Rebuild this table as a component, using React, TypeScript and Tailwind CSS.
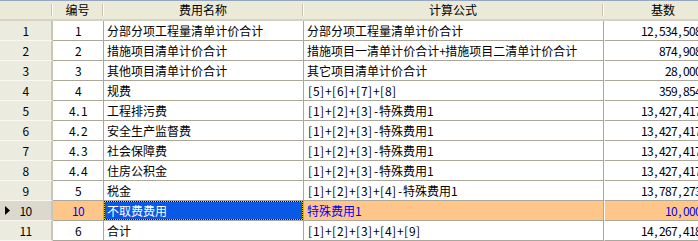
import React from 'react';

interface FeeRow {
  no: string;
  name: string;
  formula: string;
  base: string;
}

const rows: FeeRow[] = [
  { no: '1', name: '分部分项工程量清单计价合计', formula: '分部分项工程量清单计价合计', base: '12,534,508.00' },
  { no: '2', name: '措施项目清单计价合计', formula: '措施项目一清单计价合计+措施项目二清单计价合计', base: '874,908.00' },
  { no: '3', name: '其他项目清单计价合计', formula: '其它项目清单计价合计', base: '28,000.00' },
  { no: '4', name: '规费', formula: '[5]+[6]+[7]+[8]', base: '359,854.00' },
  { no: '4.1', name: '工程排污费', formula: '[1]+[2]+[3]-特殊费用1', base: '13,427,417.00' },
  { no: '4.2', name: '安全生产监督费', formula: '[1]+[2]+[3]-特殊费用1', base: '13,427,417.00' },
  { no: '4.3', name: '社会保障费', formula: '[1]+[2]+[3]-特殊费用1', base: '13,427,417.00' },
  { no: '4.4', name: '住房公积金', formula: '[1]+[2]+[3]-特殊费用1', base: '13,427,417.00' },
  { no: '5', name: '税金', formula: '[1]+[2]+[3]+[4]-特殊费用1', base: '13,787,273.00' },
  { no: '10', name: '不取费费用', formula: '特殊费用1', base: '10,000.00' },
  { no: '6', name: '合计', formula: '[1]+[2]+[3]+[4]+[9]', base: '14,267,418.00' },
];

const SELECTED = 9;

// half-width cells for ascii, like the old bitmap font
const Txt: React.FC<{ text: string }> = ({ text }) => (
  <span className="whitespace-nowrap leading-none">
    {Array.from(text).map((ch, k) =>
      ch.charCodeAt(0) < 128 ? (
        <span key={k} className="inline-block w-[6px] text-center">
          {ch}
        </span>
      ) : (
        <span key={k}>{ch}</span>
      )
    )}
  </span>
);

const HeaderCell: React.FC<{ label?: string }> = ({ label }) => (
  <div className="flex items-center h-full">
    <span className="flex-1 text-center leading-none">{label}</span>
    <span className="w-[2px] h-[12px] border-l border-[#c6c3b2] bg-white" />
  </div>
);

export default function App() {
  return (
    <div className="w-[698px] h-[241px] overflow-hidden bg-white text-[12px] text-black font-['Noto_Sans_CJK_SC',sans-serif]">
      <div className="w-[724px]">
        {/* header */}
        <div className="grid grid-cols-[53px_51px_200px_300px_120px] h-[21px] bg-[#ebe9d8] border-t border-[#94a6c0] border-b-2 border-b-[#d6d3c2]">
          <HeaderCell />
          <HeaderCell label="编号" />
          <HeaderCell label="费用名称" />
          <HeaderCell label="计算公式" />
          <div className="flex items-center h-full pr-[2px]">
            <span className="flex-1 text-center leading-none">基数</span>
          </div>
        </div>

        {rows.map((r, i) => {
          const sel = i === SELECTED;
          return (
            <div key={i} className="grid grid-cols-[53px_51px_200px_300px_120px] h-[20px]">
              <div
                className={`flex items-center border-r-2 border-r-[#c9c6b6] border-b border-b-[#f8f7f0] ${
                  sel ? 'bg-[#dbd9cd]' : 'bg-[#ecebdf]'
                }`}
              >
                <span className="w-[12px] pl-[5px] flex items-center">
                  {sel && (
                    <svg width="5" height="9" viewBox="0 0 5 9">
                      <path d="M0 0 L5 4.5 L0 9 Z" fill="#000" />
                    </svg>
                  )}
                </span>
                <span className="flex-1 text-center pr-[12px]">
                  <Txt text={String(i + 1)} />
                </span>
              </div>
              <div
                className={`flex items-center justify-center border-r border-b border-[#aca899] ${
                  sel ? 'bg-[#ffc68a] text-[#0000ff]' : ''
                }`}
              >
                <Txt text={r.no} />
              </div>
              <div className="border-r border-b border-[#aca899]">
                {sel ? (
                  <div className="h-full bg-[#e8d000]">
                    <div className="h-full flex items-center pl-[2px] border border-dotted border-black bg-[#0a58e6] bg-clip-padding text-white">
                      <Txt text={r.name} />
                    </div>
                  </div>
                ) : (
                  <div className="h-full flex items-center pl-[3px]">
                    <Txt text={r.name} />
                  </div>
                )}
              </div>
              <div
                className={`flex items-center pl-[3px] border-r border-b border-[#aca899] ${
                  sel ? 'bg-[#ffc68a] text-[#0000ff]' : ''
                }`}
              >
                <Txt text={r.formula} />
              </div>
              <div
                className={`flex items-center justify-end pr-[5px] border-b border-[#aca899] border-l border-l-white ${
                  sel ? 'bg-[#ffc68a] text-[#0000ff]' : ''
                }`}
              >
                <Txt text={r.base} />
              </div>
            </div>
          );
        })}
      </div>
    </div>
  );
}
